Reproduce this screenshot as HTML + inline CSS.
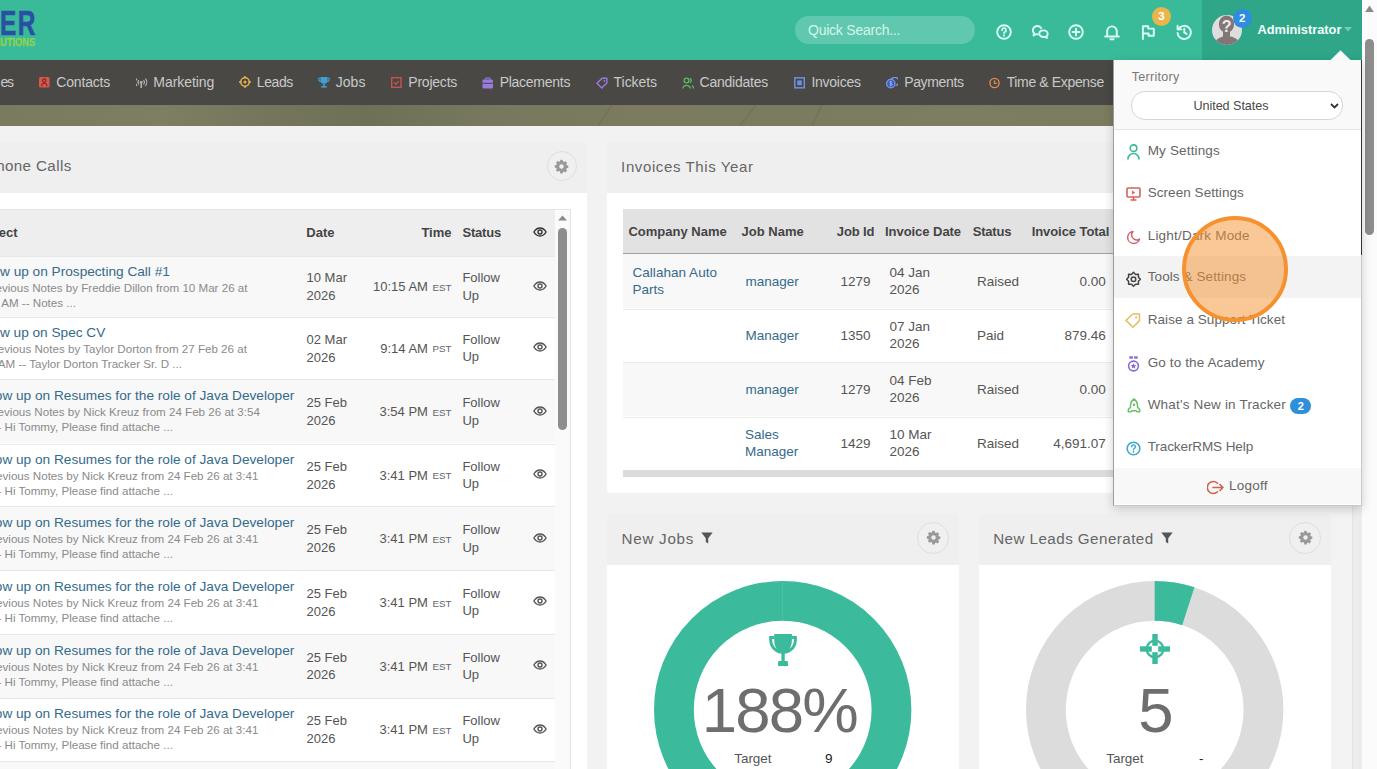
<!DOCTYPE html>
<html><head><meta charset="utf-8"><style>
html,body{margin:0;padding:0;}
body{width:1377px;height:769px;overflow:hidden;position:relative;font-family:"Liberation Sans",sans-serif;background:#f2f2f2;}
.t{position:absolute;line-height:1;white-space:nowrap;}
.r{position:absolute;}
</style></head><body>
<div class="r" style="left:0px;top:0px;width:1377px;height:769px;background:#f2f2f2;"></div><div class="r" style="left:0px;top:0px;width:1362px;height:60px;background:#39bb9a;"></div><div class="r" style="left:1202px;top:0px;width:160px;height:60px;background:#2fa688;"></div><div class="t" style="left:0px;top:6.2px;font-size:34.5px;font-weight:bold;color:#2b4fa3;transform:scaleX(0.71);transform-origin:0 0;letter-spacing:2px;-webkit-text-stroke:0.6px #2b4fa3;">ER</div><div class="t" style="left:-19.5px;top:37.2px;font-size:10.8px;font-weight:bold;color:#8fd24e;-webkit-text-stroke:0.3px #8fd24e;transform:scaleX(0.86);transform-origin:0 0;letter-spacing:0px;">SOLUTIONS</div><div class="r" style="left:795px;top:16px;width:180px;height:28px;background:rgba(255,255,255,0.2);border-radius:14px;"></div><div class="t" style="left:808.00px;top:23.15px;font-size:14px;color:rgba(235,255,248,0.85);letter-spacing:-0.229px;">Quick Search...</div><svg class="r" style="left:996px;top:24px;" width="16" height="16" viewBox="0 0 16 16"><circle cx="8" cy="8" r="6.8" fill="none" stroke="#dcfff4" stroke-width="1.9"/><path d="M6 6.2a2 2 0 1 1 2.8 1.8c-.6.3-.8.6-.8 1.3" fill="none" stroke="#dcfff4" stroke-width="1.7" stroke-linecap="round"/><circle cx="8" cy="11.4" r="1" fill="#dcfff4"/></svg><svg class="r" style="left:1030px;top:22px;" width="20" height="18" viewBox="0 0 20 18"><path d="M7.7 4C5 4 2.8 5.9 2.8 8.3c0 1.1.5 2.1 1.3 2.9l-.6 2.3 2.5-1.3c.5.1 1.1.2 1.7.2" fill="none" stroke="#dcfff4" stroke-width="1.9" stroke-linejoin="round" stroke-linecap="round"/><path d="M11.6 6.7C10.6 5.1 9.3 4 7.7 4" fill="none" stroke="#dcfff4" stroke-width="1.9"/><path d="M13.5 8.4c2.4 0 4.2 1.5 4.2 3.4 0 .9-.4 1.7-1.1 2.3l.4 1.8-2.1-1.1c-.4.1-.9.2-1.4.2-2.4 0-4.2-1.5-4.2-3.4s1.8-3.2 4.2-3.2z" fill="none" stroke="#dcfff4" stroke-width="1.9" stroke-linejoin="round"/></svg><svg class="r" style="left:1068px;top:24px;" width="16" height="16" viewBox="0 0 16 16"><circle cx="8" cy="8" r="6.8" fill="none" stroke="#dcfff4" stroke-width="1.9"/><path d="M8 4.6v6.8M4.6 8h6.8" stroke="#dcfff4" stroke-width="1.9" stroke-linecap="round"/></svg><svg class="r" style="left:1104px;top:23px;" width="16" height="18" viewBox="0 0 16 18"><path d="M1.2 13.5h13.6M3.2 13.5V8.2a4.8 4.8 0 0 1 9.6 0v5.3" fill="none" stroke="#dcfff4" stroke-width="1.9" stroke-linejoin="round" stroke-linecap="round"/><path d="M6.3 16.2h3.4" stroke="#dcfff4" stroke-width="1.9" stroke-linecap="round"/></svg><svg class="r" style="left:1140px;top:24px;" width="16" height="17" viewBox="0 0 16 17"><path d="M2.9 15V2.2h5.3v2.4h5.6v7.2H8.6V9.5H2.9" fill="none" stroke="#dcfff4" stroke-width="1.9" stroke-linejoin="round" stroke-linecap="round"/></svg><svg class="r" style="left:1176px;top:24px;" width="16" height="16" viewBox="0 0 16 16"><path d="M2.4 5.2A6.6 6.6 0 1 1 1.6 9" fill="none" stroke="#dcfff4" stroke-width="1.9" stroke-linecap="round"/><path d="M1.6 1.6v3.8h3.8" fill="none" stroke="#dcfff4" stroke-width="1.9" stroke-linecap="round" stroke-linejoin="round"/><path d="M8.3 4.6v3.8l2.4 1.6" fill="none" stroke="#dcfff4" stroke-width="1.9" stroke-linecap="round"/></svg><div class="r" style="left:1152px;top:6.5px;width:19px;height:19px;background:#eab54b;border-radius:50%;"></div><div class="t" style="left:1161.50px;top:10.77px;font-size:11.5px;color:#fff;font-weight:bold;transform:translateX(-50%);">3</div><svg class="r" style="left:1212px;top:15px;" width="30" height="30" viewBox="0 0 30 30"><defs><clipPath id="av"><circle cx="15" cy="15" r="15"/></clipPath></defs><circle cx="15" cy="15" r="15" fill="#dedede"/><g clip-path="url(#av)" fill="#857676"><ellipse cx="14.5" cy="9.2" rx="7.6" ry="8.6"/><rect x="11" y="15" width="7" height="7"/><ellipse cx="15" cy="30" rx="13" ry="9"/></g><text x="14.6" y="16.6" font-family="Liberation Sans" font-weight="bold" font-size="16" fill="#ececec" text-anchor="middle">?</text></svg><div class="r" style="left:1232.7px;top:9.1px;width:19px;height:19px;background:#2e8ddf;border-radius:50%;"></div><div class="t" style="left:1242.20px;top:12.87px;font-size:11.5px;color:#fff;font-weight:bold;transform:translateX(-50%);">2</div><div class="t" style="left:1257.50px;top:23.66px;font-size:12.8px;color:#f2fffa;font-weight:bold;">Administrator</div><svg class="r" style="left:1344px;top:27px;" width="8" height="5" viewBox="0 0 8 5"><path d="M0 0h8L4 4.5z" fill="#74ccb3"/></svg><div class="r" style="left:1362px;top:0px;width:15px;height:769px;background:#fbfbfb;"></div><svg class="r" style="left:1362px;top:3px;" width="15" height="10" viewBox="0 0 15 10"><path d="M3.2 9L7.5 2.4 11.8 9z" fill="#8a8a8a"/></svg><div class="r" style="left:1365px;top:39px;width:9px;height:196px;background:#8d8d8d;border-radius:4.5px;"></div><div class="r" style="left:0px;top:60px;width:1362px;height:45px;background:#4a4845;"></div><div class="r" style="left:0px;top:105px;width:1362px;height:21px;background:linear-gradient(90deg,#7a7a5e 0%,#7e7e62 12%,#74755b 20%,#6f7157 27%,#77785d 36%,#7c7b60 48%,#7a7b5f 58%,#7d7d62 70%,#7a7a5e 100%);"></div><svg class="r" style="left:0px;top:105px;" width="1362" height="21" viewBox="0 0 1362 21"><path d="M598 21L612 0M740 21L756 0M812 21L822 0" stroke="rgba(60,60,45,0.10)" stroke-width="2"/></svg><div class="t" style="left:0.40px;top:75.45px;font-size:14px;color:#c9c9c9;letter-spacing:-1.286px;">es</div><div class="t" style="left:56.30px;top:75.45px;font-size:14px;color:#c9c9c9;letter-spacing:-0.178px;">Contacts</div><div class="t" style="left:153.30px;top:75.45px;font-size:14px;color:#c9c9c9;letter-spacing:-0.059px;">Marketing</div><div class="t" style="left:256.80px;top:75.45px;font-size:14px;color:#c9c9c9;letter-spacing:-0.411px;">Leads</div><div class="t" style="left:335.70px;top:75.45px;font-size:14px;color:#c9c9c9;letter-spacing:0.043px;">Jobs</div><div class="t" style="left:408.30px;top:75.45px;font-size:14px;color:#c9c9c9;letter-spacing:-0.225px;">Projects</div><div class="t" style="left:499.70px;top:75.45px;font-size:14px;color:#c9c9c9;letter-spacing:-0.272px;">Placements</div><div class="t" style="left:613.60px;top:75.45px;font-size:14px;color:#c9c9c9;letter-spacing:-0.053px;">Tickets</div><div class="t" style="left:699.60px;top:75.45px;font-size:14px;color:#c9c9c9;letter-spacing:-0.248px;">Candidates</div><div class="t" style="left:811.40px;top:75.45px;font-size:14px;color:#c9c9c9;letter-spacing:-0.251px;">Invoices</div><div class="t" style="left:904.20px;top:75.45px;font-size:14px;color:#c9c9c9;letter-spacing:-0.350px;">Payments</div><div class="t" style="left:1006.70px;top:75.45px;font-size:14px;color:#c9c9c9;letter-spacing:-0.361px;">Time &amp; Expense</div><svg class="r" style="left:38.8px;top:76.7px;" width="12" height="12" viewBox="0 0 12 12"><rect x="0" y="0" width="10.5" height="10.5" rx="1.6" fill="#d9574b"/><circle cx="5.25" cy="3.6" r="1.7" fill="none" stroke="#7a2a22" stroke-width="1.1"/><path d="M2.6 9.2c0-1.8 1.2-3 2.65-3s2.65 1.2 2.65 3" fill="none" stroke="#7a2a22" stroke-width="1.1"/></svg><svg class="r" style="left:135.7px;top:77.5px;" width="12" height="12" viewBox="0 0 12 12"><circle cx="5.2" cy="4.3" r="1.3" fill="#bdbdbd"/><path d="M5.2 5.3v4.6" stroke="#bdbdbd" stroke-width="1.4"/><path d="M2.9 2.1a3.4 3.4 0 0 0 0 4.4M7.5 2.1a3.4 3.4 0 0 1 0 4.4M1 .7a5.4 5.4 0 0 0 0 7.2M9.4 .7a5.4 5.4 0 0 1 0 7.2" fill="none" stroke="#bdbdbd" stroke-width="1.1"/></svg><svg class="r" style="left:238.5px;top:75.5px;" width="12" height="12" viewBox="0 0 12 12"><circle cx="6" cy="6" r="4.2" fill="none" stroke="#e9b04a" stroke-width="1.5"/><circle cx="6" cy="6" r="1.5" fill="#e9b04a"/><path d="M6 0v2.2M6 9.8V12M0 6h2.2M9.8 6H12" stroke="#e9b04a" stroke-width="1.4"/></svg><svg class="r" style="left:317.5px;top:75.7px;" width="12" height="12" viewBox="0 0 12 12"><path d="M2.5 1h7v3.2a3.5 3.5 0 0 1-7 0z" fill="#3da0d8"/><path d="M2.5 2.2H.8v1a2.3 2.3 0 0 0 2.2 2.3M9.5 2.2h1.7v1a2.3 2.3 0 0 1-2.2 2.3" fill="none" stroke="#3da0d8" stroke-width="1.1"/><path d="M5.2 7.5h1.6v2.5H5.2z" fill="#3da0d8"/><rect x="3.3" y="10" width="5.4" height="1.6" fill="#3da0d8"/></svg><svg class="r" style="left:390.5px;top:76.8px;" width="12" height="12" viewBox="0 0 12 12"><rect x="0.7" y="0.7" width="9.3" height="9.6" fill="none" stroke="#c9524e" stroke-width="1.4"/><path d="M3 5.6l1.9 1.7 2.9-3.2" fill="none" stroke="#c9524e" stroke-width="1.3"/></svg><svg class="r" style="left:482px;top:76.5px;" width="12" height="12" viewBox="0 0 12 12"><rect x="0.5" y="2.5" width="10.5" height="9" rx="1.2" fill="#9a7be0"/><path d="M3.8 2.5V1h4v1.5" fill="none" stroke="#9a7be0" stroke-width="1.2"/><path d="M.5 6.3h10.5" stroke="#4a4845" stroke-width="1"/></svg><svg class="r" style="left:595.5px;top:76.5px;" width="12" height="12" viewBox="0 0 12 12"><path d="M1 6.2L6 1.2h4.8V6L5.8 11z" fill="none" stroke="#9a7be0" stroke-width="1.4" stroke-linejoin="round"/><circle cx="8.3" cy="3.8" r=".9" fill="#9a7be0"/></svg><svg class="r" style="left:682px;top:76.5px;" width="12" height="12" viewBox="0 0 12 12"><circle cx="4.5" cy="3.5" r="2.4" fill="none" stroke="#5dbb63" stroke-width="1.3"/><path d="M.8 11.5a3.8 3.8 0 0 1 7.5 0" fill="none" stroke="#5dbb63" stroke-width="1.3"/><path d="M7.8 1.3a2.3 2.3 0 0 1 0 4.3M10 8.5a3.5 3.5 0 0 1 1.4 3" fill="none" stroke="#5dbb63" stroke-width="1.3"/></svg><svg class="r" style="left:793.5px;top:77px;" width="12" height="12" viewBox="0 0 12 12"><rect x="0.8" y="0.8" width="9.5" height="10" fill="none" stroke="#6f8fe0" stroke-width="1.5"/><rect x="3.3" y="3.4" width="4.5" height="4.8" fill="#6f8fe0"/></svg><svg class="r" style="left:886px;top:76.5px;" width="12" height="12" viewBox="0 0 12 12"><path d="M5.2 2.2A4.2 4.2 0 1 1 9.6 8.6" fill="none" stroke="#7a96ea" stroke-width="1.3"/><circle cx="4.8" cy="6.6" r="4.2" fill="#3d5bb0" stroke="#7a96ea" stroke-width="1.3"/><path d="M6.2 5.1c-.3-.5-2.6-.8-2.6.4 0 1.2 2.7.6 2.7 1.9 0 1.1-2.3 1-2.8.4M4.8 3.8v5.6" fill="none" stroke="#8fb0ff" stroke-width=".9"/></svg><svg class="r" style="left:988.5px;top:76.5px;" width="12" height="12" viewBox="0 0 12 12"><circle cx="5.5" cy="6" r="4.6" fill="none" stroke="#e58a4d" stroke-width="1.4"/><path d="M5.5 3.4V6.3h2.3" fill="none" stroke="#e58a4d" stroke-width="1.3"/></svg><div class="r" style="left:-10px;top:142px;width:597px;height:51px;background:#efefef;border-radius:4px 4px 0 0;"></div><div class="r" style="left:-10px;top:192.5px;width:597px;height:600px;background:#ffffff;"></div><div class="t" style="left:-14.35px;top:158.33px;font-size:15.2px;color:#666;letter-spacing:0.369px;">Phone Calls</div><div class="r" style="left:546.5px;top:151.0px;width:30px;height:30px;background:#f0f0f0;border-radius:50%;box-sizing:border-box;border:1px solid #dedede;"></div><svg class="r" style="left:554.0px;top:158.5px;" width="15" height="15" viewBox="0 0 15 15"><path d="M7.5 0.8l1.2.2.3 1.6c.4.1.8.3 1.1.5l1.4-.9 1.6 1.6-.9 1.4c.2.3.4.7.5 1.1l1.6.3v2.4l-1.6.3c-.1.4-.3.8-.5 1.1l.9 1.4-1.6 1.6-1.4-.9c-.3.2-.7.4-1.1.5l-.3 1.6H6.3L6 12.4c-.4-.1-.8-.3-1.1-.5l-1.4.9-1.6-1.6.9-1.4c-.2-.3-.4-.7-.5-1.1L.8 8.7V6.3l1.6-.3c.1-.4.3-.8.5-1.1l-.9-1.4 1.6-1.6 1.4.9c.3-.2.7-.4 1.1-.5L6.3.8z" fill="#999"/><circle cx="7.5" cy="7.5" r="2.2" fill="#f0f0f0"/></svg><div class="r" style="left:-10px;top:209px;width:580.5px;height:570px;background:#fff;box-sizing:border-box;border:1px solid #e3e3e3;"></div><div class="r" style="left:-10px;top:210px;width:565px;height:46px;background:#eeeeee;"></div><div class="t" style="left:-29.35px;top:226.30px;font-size:13px;color:#444;font-weight:bold;">Subject</div><div class="t" style="left:306.30px;top:226.30px;font-size:13px;color:#444;font-weight:bold;">Date</div><div class="t" style="left:421.39px;top:226.30px;font-size:13px;color:#444;font-weight:bold;">Time</div><div class="t" style="left:462.40px;top:226.30px;font-size:13px;color:#444;font-weight:bold;letter-spacing:-0.186px;">Status</div><svg class="r" style="left:532.8px;top:226.7px;" width="14" height="10" viewBox="0 0 14 10"><path d="M0.9 5C2.5 2.3 4.6 1 7 1s4.5 1.3 6.1 4C11.5 7.7 9.4 9 7 9S2.5 7.7.9 5z" fill="none" stroke="#333" stroke-width="1.4"/><circle cx="7" cy="5" r="2" fill="none" stroke="#333" stroke-width="1.4"/></svg><div class="r" style="left:555px;top:210.5px;width:15px;height:560px;background:#fafafa;"></div><svg class="r" style="left:555px;top:212px;" width="15" height="10" viewBox="0 0 15 10"><path d="M3 8.5L7.5 3.5 12 8.5z" fill="#8a8a8a"/></svg><div class="r" style="left:558.2px;top:227.5px;width:9px;height:202px;background:#8d8d8d;border-radius:4.5px;"></div><div class="r" style="left:-10px;top:256px;width:565px;height:61.10000000000002px;background:#f8f8f8;box-sizing:border-box;border-top:1px solid #e8e8e8;"></div><div class="t" style="left:-29.55px;top:264.50px;font-size:13.65px;color:#346a8b;">Follow up on Prospecting Call #1</div><div class="t" style="left:-16.09px;top:281.53px;font-size:11.6px;color:#8a8a8a;">Previous Notes by Freddie Dillon from 10 Mar 26 at</div><div class="t" style="left:-30.38px;top:296.63px;font-size:11.6px;color:#8a8a8a;">10:15 AM -- Notes ...</div><div class="t" style="left:306.50px;top:271.25px;font-size:13px;color:#555;">10 Mar</div><div class="t" style="left:306.50px;top:289.15px;font-size:13px;color:#555;">2026</div><div class="t" style="left:432.44px;top:283.05px;font-size:9.8px;color:#666;">EST</div><div class="t" style="left:373.01px;top:280.35px;font-size:13px;color:#555;">10:15 AM</div><div class="t" style="left:462.40px;top:271.25px;font-size:13px;color:#555;">Follow</div><div class="t" style="left:462.40px;top:288.95px;font-size:13px;color:#555;">Up</div><svg class="r" style="left:532.8px;top:280.95px;" width="14" height="10" viewBox="0 0 14 10"><path d="M0.9 5C2.5 2.3 4.6 1 7 1s4.5 1.3 6.1 4C11.5 7.7 9.4 9 7 9S2.5 7.7.9 5z" fill="none" stroke="#555" stroke-width="1.4"/><circle cx="7" cy="5" r="2" fill="none" stroke="#555" stroke-width="1.4"/></svg><div class="r" style="left:-10px;top:317.1px;width:565px;height:61.69999999999999px;background:#ffffff;box-sizing:border-box;border-top:1px solid #e8e8e8;"></div><div class="t" style="left:-29.65px;top:325.90px;font-size:13.65px;color:#346a8b;">Follow up on Spec CV</div><div class="t" style="left:-13.91px;top:342.93px;font-size:11.6px;color:#8a8a8a;">Previous Notes by Taylor Dorton from 27 Feb 26 at</div><div class="t" style="left:-27.30px;top:358.03px;font-size:11.6px;color:#8a8a8a;">9:14 AM -- Taylor Dorton Tracker Sr. D ...</div><div class="t" style="left:306.50px;top:332.65px;font-size:13px;color:#555;">02 Mar</div><div class="t" style="left:306.50px;top:350.55px;font-size:13px;color:#555;">2026</div><div class="t" style="left:432.44px;top:344.45px;font-size:9.8px;color:#666;">PST</div><div class="t" style="left:380.24px;top:341.75px;font-size:13px;color:#555;">9:14 AM</div><div class="t" style="left:462.40px;top:332.65px;font-size:13px;color:#555;">Follow</div><div class="t" style="left:462.40px;top:350.35px;font-size:13px;color:#555;">Up</div><svg class="r" style="left:532.8px;top:342.35px;" width="14" height="10" viewBox="0 0 14 10"><path d="M0.9 5C2.5 2.3 4.6 1 7 1s4.5 1.3 6.1 4C11.5 7.7 9.4 9 7 9S2.5 7.7.9 5z" fill="none" stroke="#555" stroke-width="1.4"/><circle cx="7" cy="5" r="2" fill="none" stroke="#555" stroke-width="1.4"/></svg><div class="r" style="left:-10px;top:378.8px;width:565px;height:64.69999999999999px;background:#f8f8f8;box-sizing:border-box;border-top:1px solid #e8e8e8;"></div><div class="t" style="left:-27.20px;top:389.10px;font-size:13.65px;color:#346a8b;">Follow up on Resumes for the role of Java Developer</div><div class="t" style="left:-14.02px;top:406.13px;font-size:11.6px;color:#8a8a8a;">Previous Notes by Nick Kreuz from 24 Feb 26 at 3:54</div><div class="t" style="left:-27.06px;top:421.23px;font-size:11.6px;color:#8a8a8a;">PM -- Hi Tommy, Please find attache ...</div><div class="t" style="left:306.50px;top:395.85px;font-size:13px;color:#555;">25 Feb</div><div class="t" style="left:306.50px;top:413.75px;font-size:13px;color:#555;">2026</div><div class="t" style="left:432.44px;top:407.65px;font-size:9.8px;color:#666;">EST</div><div class="t" style="left:379.53px;top:404.95px;font-size:13px;color:#555;">3:54 PM</div><div class="t" style="left:462.40px;top:395.85px;font-size:13px;color:#555;">Follow</div><div class="t" style="left:462.40px;top:413.55px;font-size:13px;color:#555;">Up</div><svg class="r" style="left:532.8px;top:405.54999999999995px;" width="14" height="10" viewBox="0 0 14 10"><path d="M0.9 5C2.5 2.3 4.6 1 7 1s4.5 1.3 6.1 4C11.5 7.7 9.4 9 7 9S2.5 7.7.9 5z" fill="none" stroke="#555" stroke-width="1.4"/><circle cx="7" cy="5" r="2" fill="none" stroke="#555" stroke-width="1.4"/></svg><div class="r" style="left:-10px;top:443.5px;width:565px;height:62.80000000000001px;background:#ffffff;box-sizing:border-box;border-top:1px solid #e8e8e8;"></div><div class="t" style="left:-27.20px;top:452.85px;font-size:13.65px;color:#346a8b;">Follow up on Resumes for the role of Java Developer</div><div class="t" style="left:-15.52px;top:469.88px;font-size:11.6px;color:#8a8a8a;">Previous Notes by Nick Kreuz from 24 Feb 26 at 3:41</div><div class="t" style="left:-27.06px;top:484.98px;font-size:11.6px;color:#8a8a8a;">PM -- Hi Tommy, Please find attache ...</div><div class="t" style="left:306.50px;top:459.60px;font-size:13px;color:#555;">25 Feb</div><div class="t" style="left:306.50px;top:477.50px;font-size:13px;color:#555;">2026</div><div class="t" style="left:432.44px;top:471.40px;font-size:9.8px;color:#666;">EST</div><div class="t" style="left:379.53px;top:468.70px;font-size:13px;color:#555;">3:41 PM</div><div class="t" style="left:462.40px;top:459.60px;font-size:13px;color:#555;">Follow</div><div class="t" style="left:462.40px;top:477.30px;font-size:13px;color:#555;">Up</div><svg class="r" style="left:532.8px;top:469.29999999999995px;" width="14" height="10" viewBox="0 0 14 10"><path d="M0.9 5C2.5 2.3 4.6 1 7 1s4.5 1.3 6.1 4C11.5 7.7 9.4 9 7 9S2.5 7.7.9 5z" fill="none" stroke="#555" stroke-width="1.4"/><circle cx="7" cy="5" r="2" fill="none" stroke="#555" stroke-width="1.4"/></svg><div class="r" style="left:-10px;top:506.3px;width:565px;height:63.69999999999999px;background:#f8f8f8;box-sizing:border-box;border-top:1px solid #e8e8e8;"></div><div class="t" style="left:-27.20px;top:516.10px;font-size:13.65px;color:#346a8b;">Follow up on Resumes for the role of Java Developer</div><div class="t" style="left:-15.52px;top:533.13px;font-size:11.6px;color:#8a8a8a;">Previous Notes by Nick Kreuz from 24 Feb 26 at 3:41</div><div class="t" style="left:-27.06px;top:548.23px;font-size:11.6px;color:#8a8a8a;">PM -- Hi Tommy, Please find attache ...</div><div class="t" style="left:306.50px;top:522.85px;font-size:13px;color:#555;">25 Feb</div><div class="t" style="left:306.50px;top:540.75px;font-size:13px;color:#555;">2026</div><div class="t" style="left:432.44px;top:534.65px;font-size:9.8px;color:#666;">EST</div><div class="t" style="left:379.53px;top:531.95px;font-size:13px;color:#555;">3:41 PM</div><div class="t" style="left:462.40px;top:522.85px;font-size:13px;color:#555;">Follow</div><div class="t" style="left:462.40px;top:540.55px;font-size:13px;color:#555;">Up</div><svg class="r" style="left:532.8px;top:532.55px;" width="14" height="10" viewBox="0 0 14 10"><path d="M0.9 5C2.5 2.3 4.6 1 7 1s4.5 1.3 6.1 4C11.5 7.7 9.4 9 7 9S2.5 7.7.9 5z" fill="none" stroke="#555" stroke-width="1.4"/><circle cx="7" cy="5" r="2" fill="none" stroke="#555" stroke-width="1.4"/></svg><div class="r" style="left:-10px;top:570px;width:565px;height:64px;background:#ffffff;box-sizing:border-box;border-top:1px solid #e8e8e8;"></div><div class="t" style="left:-27.20px;top:579.95px;font-size:13.65px;color:#346a8b;">Follow up on Resumes for the role of Java Developer</div><div class="t" style="left:-15.52px;top:596.98px;font-size:11.6px;color:#8a8a8a;">Previous Notes by Nick Kreuz from 24 Feb 26 at 3:41</div><div class="t" style="left:-27.06px;top:612.08px;font-size:11.6px;color:#8a8a8a;">PM -- Hi Tommy, Please find attache ...</div><div class="t" style="left:306.50px;top:586.70px;font-size:13px;color:#555;">25 Feb</div><div class="t" style="left:306.50px;top:604.60px;font-size:13px;color:#555;">2026</div><div class="t" style="left:432.44px;top:598.50px;font-size:9.8px;color:#666;">EST</div><div class="t" style="left:379.53px;top:595.80px;font-size:13px;color:#555;">3:41 PM</div><div class="t" style="left:462.40px;top:586.70px;font-size:13px;color:#555;">Follow</div><div class="t" style="left:462.40px;top:604.40px;font-size:13px;color:#555;">Up</div><svg class="r" style="left:532.8px;top:596.4px;" width="14" height="10" viewBox="0 0 14 10"><path d="M0.9 5C2.5 2.3 4.6 1 7 1s4.5 1.3 6.1 4C11.5 7.7 9.4 9 7 9S2.5 7.7.9 5z" fill="none" stroke="#555" stroke-width="1.4"/><circle cx="7" cy="5" r="2" fill="none" stroke="#555" stroke-width="1.4"/></svg><div class="r" style="left:-10px;top:634px;width:565px;height:63.60000000000002px;background:#f8f8f8;box-sizing:border-box;border-top:1px solid #e8e8e8;"></div><div class="t" style="left:-27.20px;top:643.75px;font-size:13.65px;color:#346a8b;">Follow up on Resumes for the role of Java Developer</div><div class="t" style="left:-15.52px;top:660.78px;font-size:11.6px;color:#8a8a8a;">Previous Notes by Nick Kreuz from 24 Feb 26 at 3:41</div><div class="t" style="left:-27.06px;top:675.88px;font-size:11.6px;color:#8a8a8a;">PM -- Hi Tommy, Please find attache ...</div><div class="t" style="left:306.50px;top:650.50px;font-size:13px;color:#555;">25 Feb</div><div class="t" style="left:306.50px;top:668.40px;font-size:13px;color:#555;">2026</div><div class="t" style="left:432.44px;top:662.30px;font-size:9.8px;color:#666;">EST</div><div class="t" style="left:379.53px;top:659.60px;font-size:13px;color:#555;">3:41 PM</div><div class="t" style="left:462.40px;top:650.50px;font-size:13px;color:#555;">Follow</div><div class="t" style="left:462.40px;top:668.20px;font-size:13px;color:#555;">Up</div><svg class="r" style="left:532.8px;top:660.1999999999999px;" width="14" height="10" viewBox="0 0 14 10"><path d="M0.9 5C2.5 2.3 4.6 1 7 1s4.5 1.3 6.1 4C11.5 7.7 9.4 9 7 9S2.5 7.7.9 5z" fill="none" stroke="#555" stroke-width="1.4"/><circle cx="7" cy="5" r="2" fill="none" stroke="#555" stroke-width="1.4"/></svg><div class="r" style="left:-10px;top:697.6px;width:565px;height:63.0px;background:#ffffff;box-sizing:border-box;border-top:1px solid #e8e8e8;"></div><div class="t" style="left:-27.20px;top:707.05px;font-size:13.65px;color:#346a8b;">Follow up on Resumes for the role of Java Developer</div><div class="t" style="left:-15.52px;top:724.08px;font-size:11.6px;color:#8a8a8a;">Previous Notes by Nick Kreuz from 24 Feb 26 at 3:41</div><div class="t" style="left:-27.06px;top:739.18px;font-size:11.6px;color:#8a8a8a;">PM -- Hi Tommy, Please find attache ...</div><div class="t" style="left:306.50px;top:713.80px;font-size:13px;color:#555;">25 Feb</div><div class="t" style="left:306.50px;top:731.70px;font-size:13px;color:#555;">2026</div><div class="t" style="left:432.44px;top:725.60px;font-size:9.8px;color:#666;">EST</div><div class="t" style="left:379.53px;top:722.90px;font-size:13px;color:#555;">3:41 PM</div><div class="t" style="left:462.40px;top:713.80px;font-size:13px;color:#555;">Follow</div><div class="t" style="left:462.40px;top:731.50px;font-size:13px;color:#555;">Up</div><svg class="r" style="left:532.8px;top:723.5px;" width="14" height="10" viewBox="0 0 14 10"><path d="M0.9 5C2.5 2.3 4.6 1 7 1s4.5 1.3 6.1 4C11.5 7.7 9.4 9 7 9S2.5 7.7.9 5z" fill="none" stroke="#555" stroke-width="1.4"/><circle cx="7" cy="5" r="2" fill="none" stroke="#555" stroke-width="1.4"/></svg><div class="r" style="left:-10px;top:760.6px;width:565px;height:69.39999999999998px;background:#f8f8f8;box-sizing:border-box;border-top:1px solid #e8e8e8;"></div><div class="t" style="left:-27.20px;top:773.25px;font-size:13.65px;color:#346a8b;">Follow up on Resumes for the role of Java Developer</div><div class="t" style="left:-15.52px;top:790.28px;font-size:11.6px;color:#8a8a8a;">Previous Notes by Nick Kreuz from 24 Feb 26 at 3:41</div><div class="t" style="left:-27.06px;top:805.38px;font-size:11.6px;color:#8a8a8a;">PM -- Hi Tommy, Please find attache ...</div><div class="t" style="left:306.50px;top:780.00px;font-size:13px;color:#555;">25 Feb</div><div class="t" style="left:306.50px;top:797.90px;font-size:13px;color:#555;">2026</div><div class="t" style="left:432.44px;top:791.80px;font-size:9.8px;color:#666;">EST</div><div class="t" style="left:379.53px;top:789.10px;font-size:13px;color:#555;">3:41 PM</div><div class="t" style="left:462.40px;top:780.00px;font-size:13px;color:#555;">Follow</div><div class="t" style="left:462.40px;top:797.70px;font-size:13px;color:#555;">Up</div><svg class="r" style="left:532.8px;top:789.6999999999999px;" width="14" height="10" viewBox="0 0 14 10"><path d="M0.9 5C2.5 2.3 4.6 1 7 1s4.5 1.3 6.1 4C11.5 7.7 9.4 9 7 9S2.5 7.7.9 5z" fill="none" stroke="#555" stroke-width="1.4"/><circle cx="7" cy="5" r="2" fill="none" stroke="#555" stroke-width="1.4"/></svg><div class="r" style="left:607px;top:142px;width:750px;height:351px;background:#ffffff;border-radius:4px;"></div><div class="r" style="left:607px;top:142px;width:750px;height:50.5px;background:#efefef;border-radius:4px 4px 0 0;"></div><div class="t" style="left:621.10px;top:158.50px;font-size:15px;color:#666;letter-spacing:0.614px;">Invoices This Year</div><div class="r" style="left:623px;top:209px;width:700px;height:45.3px;background:#e2e2e2;box-sizing:border-box;border-bottom:1px solid #9aa3ad;"></div><div class="t" style="left:628.40px;top:224.50px;font-size:13px;color:#444;font-weight:bold;letter-spacing:0.014px;">Company Name</div><div class="t" style="left:741.40px;top:224.50px;font-size:13px;color:#444;font-weight:bold;letter-spacing:0.038px;">Job Name</div><div class="t" style="left:836.80px;top:224.50px;font-size:13px;color:#444;font-weight:bold;letter-spacing:-0.115px;">Job Id</div><div class="t" style="left:885.00px;top:224.50px;font-size:13px;color:#444;font-weight:bold;letter-spacing:-0.044px;">Invoice Date</div><div class="t" style="left:972.70px;top:224.50px;font-size:13px;color:#444;font-weight:bold;letter-spacing:-0.206px;">Status</div><div class="t" style="left:1031.70px;top:224.50px;font-size:13px;color:#444;font-weight:bold;letter-spacing:-0.075px;">Invoice Total</div><div class="r" style="left:623px;top:254.3px;width:700px;height:54.19999999999999px;background:#f8f8f8;"></div><div class="t" style="left:632.50px;top:266.07px;font-size:13.5px;color:#346a8b;letter-spacing:0.036px;">Callahan Auto</div><div class="t" style="left:632.50px;top:282.97px;font-size:13.5px;color:#346a8b;">Parts</div><div class="t" style="left:745.50px;top:275.17px;font-size:13.5px;color:#346a8b;">manager</div><div class="t" style="left:840.50px;top:275.17px;font-size:13.5px;color:#555;">1279</div><div class="t" style="left:889.40px;top:266.07px;font-size:13.5px;color:#555;">04 Jan</div><div class="t" style="left:889.40px;top:282.97px;font-size:13.5px;color:#555;">2026</div><div class="t" style="left:977.00px;top:275.17px;font-size:13.5px;color:#555;">Raised</div><div class="t" style="left:1079.52px;top:275.17px;font-size:13.5px;color:#555;">0.00</div><div class="r" style="left:623px;top:308.5px;width:700px;height:53.89999999999998px;background:#ffffff;box-sizing:border-box;border-top:1px solid #ebebeb;"></div><div class="t" style="left:745.50px;top:329.22px;font-size:13.5px;color:#346a8b;">Manager</div><div class="t" style="left:840.50px;top:329.22px;font-size:13.5px;color:#555;">1350</div><div class="t" style="left:889.40px;top:320.12px;font-size:13.5px;color:#555;">07 Jan</div><div class="t" style="left:889.40px;top:337.02px;font-size:13.5px;color:#555;">2026</div><div class="t" style="left:977.00px;top:329.22px;font-size:13.5px;color:#555;">Paid</div><div class="t" style="left:1064.51px;top:329.22px;font-size:13.5px;color:#555;">879.46</div><div class="r" style="left:623px;top:362.4px;width:700px;height:54.10000000000002px;background:#f8f8f8;box-sizing:border-box;border-top:1px solid #ebebeb;"></div><div class="t" style="left:745.50px;top:383.22px;font-size:13.5px;color:#346a8b;">manager</div><div class="t" style="left:840.50px;top:383.22px;font-size:13.5px;color:#555;">1279</div><div class="t" style="left:889.40px;top:374.12px;font-size:13.5px;color:#555;">04 Feb</div><div class="t" style="left:889.40px;top:391.02px;font-size:13.5px;color:#555;">2026</div><div class="t" style="left:977.00px;top:383.22px;font-size:13.5px;color:#555;">Raised</div><div class="t" style="left:1079.52px;top:383.22px;font-size:13.5px;color:#555;">0.00</div><div class="r" style="left:623px;top:416.5px;width:700px;height:53.80000000000001px;background:#ffffff;box-sizing:border-box;border-top:1px solid #ebebeb;"></div><div class="t" style="left:745.00px;top:428.07px;font-size:13.5px;color:#346a8b;">Sales</div><div class="t" style="left:745.00px;top:444.97px;font-size:13.5px;color:#346a8b;">Manager</div><div class="t" style="left:840.50px;top:437.17px;font-size:13.5px;color:#555;">1429</div><div class="t" style="left:889.40px;top:428.07px;font-size:13.5px;color:#555;">10 Mar</div><div class="t" style="left:889.40px;top:444.97px;font-size:13.5px;color:#555;">2026</div><div class="t" style="left:977.00px;top:437.17px;font-size:13.5px;color:#555;">Raised</div><div class="t" style="left:1053.25px;top:437.17px;font-size:13.5px;color:#555;">4,691.07</div><div class="r" style="left:623px;top:470.3px;width:700px;height:6.5px;background:#dcdcdc;"></div><div class="r" style="left:607.4px;top:514px;width:351.3px;height:300px;background:#ffffff;border-radius:4px;"></div><div class="r" style="left:607.4px;top:514px;width:351.3px;height:50.5px;background:#efefef;border-radius:4px 4px 0 0;"></div><div class="t" style="left:621.60px;top:530.73px;font-size:15.2px;color:#666;letter-spacing:0.723px;">New Jobs</div><svg class="r" style="left:701.4px;top:532px;" width="12" height="12" viewBox="0 0 12 12"><path d="M0.3 0.5h11.4L7.2 6.2v5.3L4.8 10V6.2z" fill="#555"/></svg><div class="r" style="left:917.0px;top:521.8px;width:32px;height:32px;background:#f0f0f0;border-radius:50%;box-sizing:border-box;border:1px solid #dedede;"></div><svg class="r" style="left:925.5px;top:530.3px;" width="15" height="15" viewBox="0 0 15 15"><path d="M7.5 0.8l1.2.2.3 1.6c.4.1.8.3 1.1.5l1.4-.9 1.6 1.6-.9 1.4c.2.3.4.7.5 1.1l1.6.3v2.4l-1.6.3c-.1.4-.3.8-.5 1.1l.9 1.4-1.6 1.6-1.4-.9c-.3.2-.7.4-1.1.5l-.3 1.6H6.3L6 12.4c-.4-.1-.8-.3-1.1-.5l-1.4.9-1.6-1.6.9-1.4c-.2-.3-.4-.7-.5-1.1L.8 8.7V6.3l1.6-.3c.1-.4.3-.8.5-1.1l-.9-1.4 1.6-1.6 1.4.9c.3-.2.7-.4 1.1-.5L6.3.8z" fill="#999"/><circle cx="7.5" cy="7.5" r="2.2" fill="#f0f0f0"/></svg><div class="r" style="left:979px;top:514px;width:352.2px;height:300px;background:#ffffff;border-radius:4px;"></div><div class="r" style="left:979px;top:514px;width:352.2px;height:50.5px;background:#efefef;border-radius:4px 4px 0 0;"></div><div class="t" style="left:993.20px;top:530.73px;font-size:15.2px;color:#666;letter-spacing:0.445px;">New Leads Generated</div><svg class="r" style="left:1161.3px;top:532px;" width="12" height="12" viewBox="0 0 12 12"><path d="M0.3 0.5h11.4L7.2 6.2v5.3L4.8 10V6.2z" fill="#555"/></svg><div class="r" style="left:1289.3px;top:521.7px;width:32px;height:32px;background:#f0f0f0;border-radius:50%;box-sizing:border-box;border:1px solid #dedede;"></div><svg class="r" style="left:1297.8px;top:530.2px;" width="15" height="15" viewBox="0 0 15 15"><path d="M7.5 0.8l1.2.2.3 1.6c.4.1.8.3 1.1.5l1.4-.9 1.6 1.6-.9 1.4c.2.3.4.7.5 1.1l1.6.3v2.4l-1.6.3c-.1.4-.3.8-.5 1.1l.9 1.4-1.6 1.6-1.4-.9c-.3.2-.7.4-1.1.5l-.3 1.6H6.3L6 12.4c-.4-.1-.8-.3-1.1-.5l-1.4.9-1.6-1.6.9-1.4c-.2-.3-.4-.7-.5-1.1L.8 8.7V6.3l1.6-.3c.1-.4.3-.8.5-1.1l-.9-1.4 1.6-1.6 1.4.9c.3-.2.7-.4 1.1-.5L6.3.8z" fill="#999"/><circle cx="7.5" cy="7.5" r="2.2" fill="#f0f0f0"/></svg><svg class="r" style="left:654.2px;top:581.4000000000001px;overflow:visible;" width="257.4" height="257.4" viewBox="0 0 257.4 257.4"><circle cx="128.7" cy="128.7" r="108.8" fill="none" stroke="#3bbb9b" stroke-width="39.79999999999998"/><path d="M128.7 0v39.79999999999998" stroke="#5cc9ad" stroke-width="0.6"/></svg><svg class="r" style="left:1026.2px;top:581.4000000000001px;overflow:visible;" width="257.4" height="257.4" viewBox="0 0 257.4 257.4"><circle cx="128.7" cy="128.7" r="108.8" fill="none" stroke="#dcdcdc" stroke-width="39.79999999999998"/><path d="M128.7 0A128.7 128.7 0 0 1 168.47 6.30L156.17 44.15A88.9 88.9 0 0 0 128.7 39.80z" fill="#3bbb9b"/></svg><svg class="r" style="left:767px;top:632px;" width="32" height="35" viewBox="0 0 32 35"><path d="M7.2 2h17.7v6.2c0 6.8-3.8 12.3-8.85 14.6C11 20.5 7.2 15 7.2 8.2z" fill="#3bbb9b"/><path d="M7.6 5.4H3.7v3.2c0 5.6 4.2 10.2 9.8 11.6M24.5 5.4h3.9v3.2c0 5.6-4.2 10.2-9.8 11.6" fill="none" stroke="#3bbb9b" stroke-width="3"/><rect x="14.4" y="21" width="3.3" height="9" fill="#3bbb9b"/><path d="M11.1 30.2c0-.8.6-1.2 1.4-1.2h7.1c.8 0 1.4.4 1.4 1.2v3.7h-9.9z" fill="#3bbb9b"/></svg><svg class="r" style="left:1140px;top:633.8px;" width="30" height="30" viewBox="0 0 30 30"><circle cx="15" cy="15" r="8.3" fill="none" stroke="#3bbb9b" stroke-width="2.3"/><rect x="12.3" y="0" width="5.4" height="11.8" fill="#3bbb9b"/><rect x="12.3" y="18.2" width="5.4" height="11.8" fill="#3bbb9b"/><rect x="0" y="12.3" width="11.8" height="5.4" fill="#3bbb9b"/><rect x="18.2" y="12.3" width="11.8" height="5.4" fill="#3bbb9b"/></svg><div class="t" style="left:701.80px;top:678.85px;font-size:63.5px;color:#6e6e6e;letter-spacing:-1.803px;">188%</div><div class="t" style="left:1138.30px;top:678.85px;font-size:63.5px;color:#6e6e6e;">5</div><div class="t" style="left:734.30px;top:752.37px;font-size:13.5px;color:#555;letter-spacing:-0.084px;">Target</div><div class="t" style="left:825.00px;top:752.37px;font-size:13.5px;color:#222;">9</div><div class="t" style="left:1106.30px;top:752.37px;font-size:13.5px;color:#555;letter-spacing:-0.084px;">Target</div><div class="t" style="left:1199.00px;top:752.37px;font-size:13.5px;color:#222;">-</div><div class="r" style="left:1331.5px;top:514px;width:21px;height:255px;background:#f3f3f3;"></div><div class="r" style="left:1352px;top:126px;width:1px;height:643px;background:#e2e2e2;"></div><div class="r" style="left:1353px;top:126px;width:9px;height:643px;background:#ececec;"></div><div class="r" style="left:1112.5px;top:60px;width:249px;height:445.5px;background:#ffffff;box-sizing:border-box;border:1px solid #c9c9c9;border-top:none;border-left-color:rgba(60,60,60,0.5);box-shadow:0 3px 10px rgba(0,0,0,0.18);"></div><div class="r" style="left:1113.5px;top:60px;width:247px;height:68.5px;background:#f9f9f9;border-bottom:1px solid #e4e4e4;"></div><svg class="r" style="left:1329.5px;top:49.8px;" width="21" height="11" viewBox="0 0 21 11"><path d="M0 10.5L10.5 0.3 21 10.5z" fill="#f9f9f9"/></svg><div class="r" style="left:1360.5px;top:60px;width:1px;height:195px;background:#333;"></div><div class="t" style="left:1131.80px;top:70.92px;font-size:12.5px;color:#777;letter-spacing:0.295px;">Territory</div><div class="r" style="left:1131px;top:91.2px;width:211.5px;height:28.5px;background:#ffffff;box-sizing:border-box;border:1px solid #d6d6d6;border-radius:14px;"></div><div class="t" style="left:1193.40px;top:100.13px;font-size:12.6px;color:#484848;letter-spacing:-0.037px;">United States</div><svg class="r" style="left:1329.5px;top:102.5px;" width="9" height="6" viewBox="0 0 9 6"><path d="M1 1l3.5 3.5L8 1" fill="none" stroke="#333" stroke-width="1.8"/></svg><div class="r" style="left:1113.5px;top:256px;width:247px;height:41.5px;background:#f3f3f3;"></div><div class="r" style="left:1113.5px;top:468.4px;width:247px;height:36px;background:#f8f8f8;"></div><div class="t" style="left:1147.70px;top:144.07px;font-size:13.5px;color:#666666;letter-spacing:0.157px;">My Settings</div><div class="t" style="left:1147.70px;top:185.87px;font-size:13.5px;color:#666666;letter-spacing:0.057px;">Screen Settings</div><div class="t" style="left:1147.70px;top:228.67px;font-size:13.5px;color:#666666;letter-spacing:0.204px;">Light/Dark Mode</div><div class="t" style="left:1147.70px;top:270.47px;font-size:13.5px;color:#666666;letter-spacing:0.100px;">Tools &amp; Settings</div><div class="t" style="left:1147.70px;top:312.97px;font-size:13.5px;color:#666666;letter-spacing:0.071px;">Raise a Support Ticket</div><div class="t" style="left:1147.70px;top:356.07px;font-size:13.5px;color:#666666;letter-spacing:0.118px;">Go to the Academy</div><div class="t" style="left:1147.70px;top:397.67px;font-size:13.5px;color:#666666;letter-spacing:0.174px;">What's New in Tracker</div><div class="t" style="left:1147.70px;top:439.87px;font-size:13.5px;color:#666666;letter-spacing:-0.091px;">TrackerRMS Help</div><div class="r" style="left:1290.2px;top:397.5px;width:21px;height:16px;background:#2f8fd8;border-radius:8px;"></div><div class="t" style="left:1300.70px;top:401.19px;font-size:11px;color:#fff;font-weight:bold;transform:translateX(-50%);">2</div><div class="t" style="left:1228.90px;top:479.27px;font-size:13.5px;color:#666666;letter-spacing:0.282px;">Logoff</div><svg class="r" style="left:1127px;top:144px;" width="13" height="16" viewBox="0 0 13 16"><circle cx="6.5" cy="4.2" r="3.3" fill="none" stroke="#3bb99a" stroke-width="1.6"/><path d="M1 15a5.5 5.5 0 0 1 11 0" fill="none" stroke="#3bb99a" stroke-width="1.6" stroke-linecap="round"/></svg><svg class="r" style="left:1126px;top:187px;" width="15" height="14" viewBox="0 0 15 14"><rect x="1" y="1" width="13" height="9" rx="1" fill="none" stroke="#d9605a" stroke-width="1.6"/><path d="M6 3.5v4l3.2-2z" fill="#d9605a"/><path d="M7.5 10v2.5M4.5 13h6" stroke="#d9605a" stroke-width="1.6"/></svg><svg class="r" style="left:1126px;top:229.5px;" width="15" height="15" viewBox="0 0 15 15"><path d="M7 1.5A6 6 0 1 0 13.5 9 5 5 0 0 1 7 1.5z" fill="none" stroke="#cf5a68" stroke-width="1.4" stroke-linejoin="round"/></svg><svg class="r" style="left:1126px;top:270.5px;" width="15" height="17" viewBox="0 0 15 17"><path d="M7.50 1.30 L9.53 3.40 L12.45 3.35 L12.40 6.27 L14.50 8.30 L12.40 10.33 L12.45 13.25 L9.53 13.20 L7.50 15.30 L5.47 13.20 L2.55 13.25 L2.60 10.33 L0.50 8.30 L2.60 6.27 L2.55 3.35 L5.47 3.40z" fill="none" stroke="#444" stroke-width="1.5" stroke-linejoin="round"/><circle cx="7.5" cy="8.3" r="2.3" fill="none" stroke="#444" stroke-width="1.5"/></svg><svg class="r" style="left:1125px;top:313px;" width="16" height="16" viewBox="0 0 16 16"><path d="M1 7.4L7.9 1h6.6v6.6L7.9 14.3z" fill="none" stroke="#e2bf62" stroke-width="1.5" stroke-linejoin="round"/><circle cx="11.2" cy="4.4" r="1.1" fill="#e2bf62"/></svg><svg class="r" style="left:1127px;top:355.5px;" width="13" height="16" viewBox="0 0 13 16"><rect x="2.3" y="0.3" width="3.6" height="2.4" fill="#8a6ad0"/><rect x="7.1" y="0.3" width="3.6" height="2.4" fill="#8a6ad0"/><circle cx="6.5" cy="10" r="4.9" fill="none" stroke="#8a6ad0" stroke-width="1.6"/><path d="M6.5 7.3l.9 1.8 2 .2-1.5 1.3.5 2-1.9-1-1.9 1 .5-2-1.5-1.3 2-.2z" fill="#8a6ad0"/></svg><svg class="r" style="left:1126.5px;top:397.5px;" width="14" height="15" viewBox="0 0 14 15"><path d="M7 1C4.2 2.6 3.4 5.5 3.4 9.3L1.3 11.6v2.2h2.6l.9-1h4.4l.9 1h2.6v-2.2l-2.1-2.3C10.6 5.5 9.8 2.6 7 1z" fill="none" stroke="#6cbf6a" stroke-width="1.5" stroke-linejoin="round"/><circle cx="7" cy="6.8" r="1.2" fill="#6cbf6a"/></svg><svg class="r" style="left:1126px;top:440.5px;" width="15" height="15" viewBox="0 0 15 15"><circle cx="7.5" cy="7.5" r="6.3" fill="none" stroke="#3aa8d0" stroke-width="1.6"/><path d="M5.6 5.8a1.9 1.9 0 1 1 2.7 1.7c-.5.3-.8.6-.8 1.3" fill="none" stroke="#3aa8d0" stroke-width="1.4" stroke-linecap="round"/><circle cx="7.5" cy="10.8" r=".9" fill="#3aa8d0"/></svg><svg class="r" style="left:1206.5px;top:480px;" width="17" height="15" viewBox="0 0 17 15"><path d="M10.5 3.2A6 6 0 1 0 10.5 11.8" fill="none" stroke="#d06050" stroke-width="1.6" stroke-linecap="round"/><path d="M6 7.5h10M13 4.5l3 3-3 3" fill="none" stroke="#d06050" stroke-width="1.6" stroke-linecap="round" stroke-linejoin="round"/></svg><div class="r" style="left:1181.6px;top:215.9px;width:106px;height:106px;background:rgba(245,146,47,0.5);border-radius:50%;box-sizing:border-box;border:4.6px solid #f5922f;"></div>
</body></html>
